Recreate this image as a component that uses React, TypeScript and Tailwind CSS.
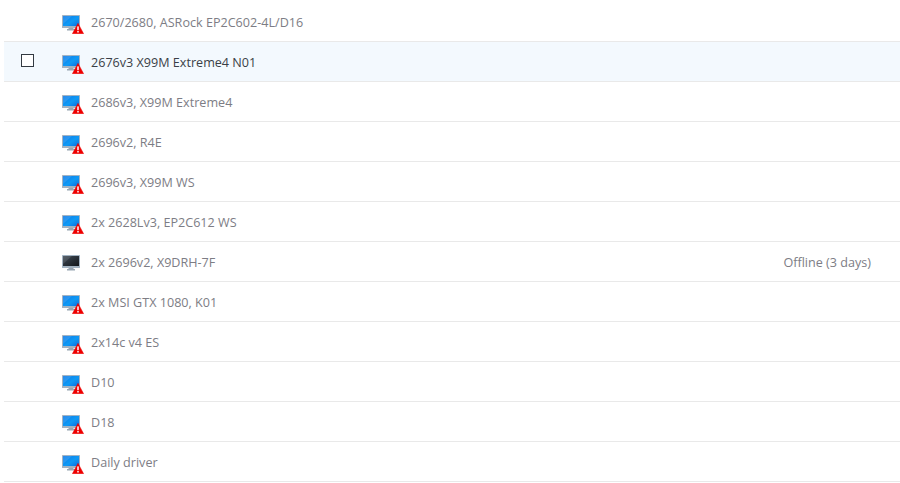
const rows: { name: string; status?: string; offline?: boolean; active?: boolean }[] = [
  { name: "2670/2680, ASRock EP2C602-4L/D16" },
  { name: "2676v3 X99M Extreme4 N01", active: true },
  { name: "2686v3, X99M Extreme4" },
  { name: "2696v2, R4E" },
  { name: "2696v3, X99M WS" },
  { name: "2x 2628Lv3, EP2C612 WS" },
  { name: "2x 2696v2, X9DRH-7F", status: "Offline (3 days)", offline: true },
  { name: "2x MSI GTX 1080, K01" },
  { name: "2x14c v4 ES" },
  { name: "D10" },
  { name: "D18" },
  { name: "Daily driver" },
];

function Monitor({ offline }: { offline?: boolean }) {
  const id = offline ? "scrOff" : "scrOn";
  return (
    <svg width="18" height="16" viewBox="0 0 18 16" className="block">
      <defs>
        <linearGradient id={id} x1="0" y1="0" x2="1" y2="1">
          {offline ? (
            <>
              <stop offset="0" stopColor="#3f4a55" />
              <stop offset="1" stopColor="#14181d" />
            </>
          ) : (
            <>
              <stop offset="0" stopColor="#0b78e8" />
              <stop offset="0.55" stopColor="#0f9af5" />
              <stop offset="1" stopColor="#0a70e0" />
            </>
          )}
        </linearGradient>
      </defs>
      <path d="M6.5 12h5v2h1.5v1.5H5V14h1.5z" fill="#9aa7b4" />
      <rect x="0" y="0" width="18" height="13" rx="0.6" fill="#a3b3c2" />
      <rect x="1" y="1" width="16" height="10" fill={`url(#${id})`} />
      <path d="M1 9 L10 1 H1z" fill="#ffffff" opacity="0.12" />
    </svg>
  );
}

function Warn() {
  return (
    <svg width="12" height="11" viewBox="0 0 12 11" className="absolute left-[10px] top-[8px]">
      <path d="M6 0.2 L11.7 10.8 H0.3 Z" fill="#ee0000" stroke="#ee0000" strokeWidth="0.4" strokeLinejoin="round" />
      <rect x="5.25" y="3.4" width="1.5" height="3.8" fill="#ffffff" />
      <rect x="5.25" y="8" width="1.5" height="1.5" fill="#ffffff" />
    </svg>
  );
}

export default function App() {
  return (
    <div className="w-[900px] h-[483px] overflow-hidden bg-white pl-[4px] font-['Open_Sans','Noto_Sans',sans-serif] text-[12.6px]">
      <div className="flex flex-col pt-[2px]">
        {rows.map((r) => (
          <div
            key={r.name}
            className={`flex items-center h-[40px] border-b border-[#e9e9e9] ${r.active ? "bg-[#f3f9fe]" : "bg-white"}`}
          >
            <div className="w-[58px] shrink-0 pl-[17px] flex items-center">
              {r.active && <div className="w-[13px] h-[13px] border border-[#333a42] bg-white -mt-[3px]" />}
            </div>
            <div className="relative w-[29px] h-[19px] shrink-0 mt-[6px]">
              <Monitor offline={r.offline} />
              {!r.offline && <Warn />}
            </div>
            <span className={`flex-1 pt-[3px] ${r.active ? "text-[#3a3f47]" : "text-[#7d7d85]"}`}>{r.name}</span>
            {r.status && <span className="pt-[3px] pr-[29px] text-[#7d7d85]">{r.status}</span>}
          </div>
        ))}
      </div>
    </div>
  );
}
